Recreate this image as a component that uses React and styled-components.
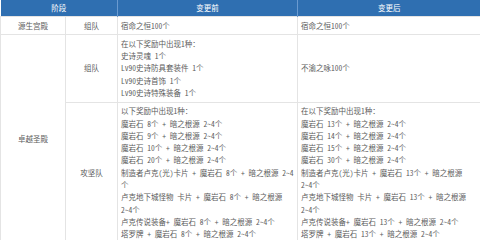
import React from "react";
import styled, { createGlobalStyle } from "styled-components";

const Global = createGlobalStyle`
  html, body { margin: 0; padding: 0; background: #fff; }
  body { font-family: "Noto Sans Mono CJK SC", "Noto Sans CJK SC", "Noto Sans", sans-serif; }
`;

const Table = styled.table`
  width: 480px;
  border-collapse: collapse;
  table-layout: fixed;
  font-size: 7.5px;
  line-height: 12.3px;
  color: #5c5c5c;
`;

const Head = styled.th`
  background: #2f6fb1;
  color: #fff;
  font-weight: normal;
  height: 16px;
  padding: 0;
  text-align: center;
  border-right: 1px solid #6a9ad0;
  &:last-child { border-right: none; }
`;

const Cell = styled.td`
  border: 1px solid #e4e4e4;
  padding: 2.5px 3px;
  vertical-align: middle;
  text-align: ${(p) => (p.$center ? "center" : "left")};
  overflow: hidden;
`;

const Line = styled.div`
  white-space: nowrap;
`;

const Lines = ({ items }) => items.map((t, i) => <Line key={i}>{t}</Line>);

const before2 = [
  "在以下奖励中出现1种：",
  "史诗灵魂 1个",
  "Lv90史诗防具套装件 1个",
  "Lv90史诗首饰 1个",
  "Lv90史诗特殊装备 1个",
];

const before3 = [
  "以下奖励中出现1种：",
  "魔岩石 8个 + 暗之根源 2~4个",
  "魔岩石 9个 + 暗之根源 2~4个",
  "魔岩石 10个 + 暗之根源 2~4个",
  "魔岩石 20个 + 暗之根源 2~4个",
  "制造者卢克(光)卡片 + 魔岩石 8个 + 暗之根源 2~4",
  "个",
  "卢克地下城怪物 卡片 + 魔岩石 8个 + 暗之根源",
  "2~4个",
  "卢克传说装备+ 魔岩石 8个 + 暗之根源 2~4个",
  "塔罗牌 + 魔岩石 8个 + 暗之根源 2~4个",
];

const after3 = [
  "在以下奖励中出现1种：",
  "魔岩石 13个 + 暗之根源 2~4个",
  "魔岩石 14个 + 暗之根源 2~4个",
  "魔岩石 15个 + 暗之根源 2~4个",
  "魔岩石 30个 + 暗之根源 2~4个",
  "制造者卢克(光)卡片 + 魔岩石 13个 + 暗之根源",
  "2~4个",
  "卢克地下城怪物 卡片 + 魔岩石 13个 + 暗之根源",
  "2~4个",
  "卢克传说装备+ 魔岩石 13个 + 暗之根源 2~4个",
  "塔罗牌 + 魔岩石 13个 + 暗之根源 2~4个",
];

export default function App() {
  return (
    <>
      <Global />
      <Table>
        <colgroup>
          <col style={{ width: 65 }} />
          <col style={{ width: 52 }} />
          <col style={{ width: 180 }} />
          <col style={{ width: 183 }} />
        </colgroup>
        <thead>
          <tr>
            <Head colSpan={2}>阶段</Head>
            <Head>变更前</Head>
            <Head>变更后</Head>
          </tr>
        </thead>
        <tbody>
          <tr>
            <Cell $center>源生宫殿</Cell>
            <Cell $center>组队</Cell>
            <Cell>宿命之恒100个</Cell>
            <Cell>宿命之恒100个</Cell>
          </tr>
          <tr>
            <Cell $center rowSpan={2}>卓越圣殿</Cell>
            <Cell $center>组队</Cell>
            <Cell><Lines items={before2} /></Cell>
            <Cell>不渝之咏100个</Cell>
          </tr>
          <tr>
            <Cell $center>攻坚队</Cell>
            <Cell><Lines items={before3} /></Cell>
            <Cell><Lines items={after3} /></Cell>
          </tr>
        </tbody>
      </Table>
    </>
  );
}
